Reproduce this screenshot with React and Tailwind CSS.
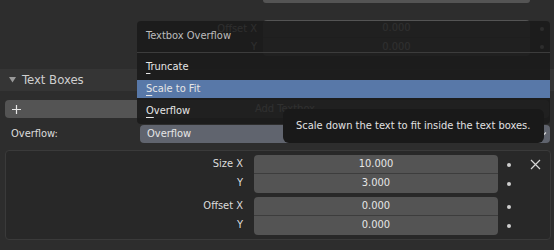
import React from "react";

const font = { fontFamily: '"DejaVu Sans Condensed", "Liberation Sans", sans-serif' };

const Dot = () => <span className="block h-[4px] w-[4px] rounded-full bg-[#cfcfcf]" />;

const FieldGroup = ({ rows }) => (
  <div className="flex flex-col">
    {rows.map((r, i) => (
      <div key={i} className="flex h-[19px] items-center">
        <div className="w-[237px] text-right text-[#dcdcdc]">{r.label}</div>
        <div
          className={`ml-[11px] flex h-[19px] w-[244px] items-center justify-center bg-[#545454] text-[#e6e6e6] ${
            i === 0 ? "rounded-t-[4px] border-b border-[#3d3d3d]" : "rounded-b-[4px]"
          }`}
        >
          {r.value}
        </div>
        <div className="flex w-[22px] justify-center">
          <Dot />
        </div>
        <div className="flex w-[30px] justify-center">
          {r.close && (
            <svg width="11" height="11" viewBox="0 0 11 11">
              <path d="M1 1 L10 10 M10 1 L1 10" stroke="#d6d6d6" strokeWidth="1.2" />
            </svg>
          )}
        </div>
      </div>
    ))}
  </div>
);

const MenuItem = ({ first, rest, active }) => (
  <div className="py-[2px]">
    <div className={`flex h-[18px] items-center pl-[9px] ${active ? "bg-[#5878a8]" : ""}`}>
      <span className="text-[#e6e6e6]">
        <span className="underline decoration-1 underline-offset-[3px]">{first}</span>
        {rest}
      </span>
    </div>
  </div>
);

export default function App() {
  return (
    <div className="relative h-[250px] w-[554px] overflow-hidden bg-[#2d2d2d] text-[11px]" style={font}>
      {/* what sits behind the open menu */}
      <div className="h-[69px]">
        <div className="ml-[263px] h-[3px] w-[267px] rounded-b-[3px] bg-[#545454]" />
        <div className="mt-[17px] flex flex-col">
          {[
            ["Offset X", "0.000"],
            ["Y", "0.000"],
          ].map(([l, v], i) => (
            <div key={i} className="flex h-[18px] items-center">
              <div className="w-[257px] text-right text-[#dcdcdc]">{l}</div>
              <div
                className={`ml-[6px] flex h-[18px] w-[267px] items-center justify-center bg-[#545454] text-[#e6e6e6] ${
                  i === 0 ? "rounded-t-[4px] border-b border-[#3d3d3d]" : "rounded-b-[4px]"
                }`}
              >
                {v}
              </div>
              <div className="flex w-[24px] justify-center">
                <Dot />
              </div>
            </div>
          ))}
        </div>
      </div>

      {/* panel header */}
      <div className="flex h-[22px] items-center bg-[#353535]">
        <svg className="ml-[9px]" width="7" height="6" viewBox="0 0 7 6">
          <path d="M0 0 H7 L3.5 5.5 Z" fill="#9a9a9a" />
        </svg>
        <span className="ml-[6px] text-[13px] text-[#cfcfcf]">Text Boxes</span>
      </div>

      {/* add button */}
      <div className="mx-[5px] mt-[9px] flex h-[18px] items-center rounded-[4px] bg-[#545454]">
        <svg className="ml-[7px]" width="9" height="9" viewBox="0 0 9 9">
          <path d="M4.5 0 V9 M0 4.5 H9" stroke="#e6e6e6" strokeWidth="1.2" />
        </svg>
        <span className="flex-1 text-center text-[#e6e6e6]">Add Textbox</span>
      </div>

      {/* overflow row */}
      <div className="mt-[7px] flex h-[18px] items-center">
        <span className="ml-[11px] w-[129px] text-[#dcdcdc]">Overflow:</span>
        <div className="flex h-[18px] w-[410px] items-center justify-between rounded-[4px] bg-[#60646e] pl-[7px] pr-[3px]">
          <span className="text-[#e6e6e6]">Overflow</span>
          <svg width="8" height="6" viewBox="0 0 8 6">
            <path d="M1 1.5 L4 4.5 L7 1.5" stroke="#d6d6d6" strokeWidth="1.2" fill="none" />
          </svg>
        </div>
      </div>

      {/* box */}
      <div className="mx-[5px] mt-[7px] flex w-[546px] flex-col gap-[4px] rounded-[4px] border border-[#3a3a3a] bg-[#282828] py-[4px]">
        <FieldGroup
          rows={[
            { label: "Size X", value: "10.000", close: true },
            { label: "Y", value: "3.000" },
          ]}
        />
        <FieldGroup
          rows={[
            { label: "Offset X", value: "0.000" },
            { label: "Y", value: "0.000" },
          ]}
        />
      </div>

      {/* enum menu */}
      <div className="absolute left-[137px] top-[21px] w-[413px] rounded-[4px] bg-[rgba(27,27,27,0.9)] pb-[2px]">
        <div className="flex h-[31px] items-center pl-[9px] text-[#bdbdbd]">Textbox Overflow</div>
        <div className="h-px bg-[#3c3c3c]" />
        <div className="pt-[3px]">
          <MenuItem first="T" rest="runcate" />
          <MenuItem first="S" rest="cale to Fit" active />
          <MenuItem first="O" rest="verflow" />
        </div>
      </div>

      {/* tooltip */}
      <div className="absolute left-[283px] top-[109px] flex h-[34px] w-[261px] items-center rounded-[6px] bg-[#191919] pl-[13px] text-[#e2e2e2]">
        Scale down the text to fit inside the text boxes.
      </div>
    </div>
  );
}
